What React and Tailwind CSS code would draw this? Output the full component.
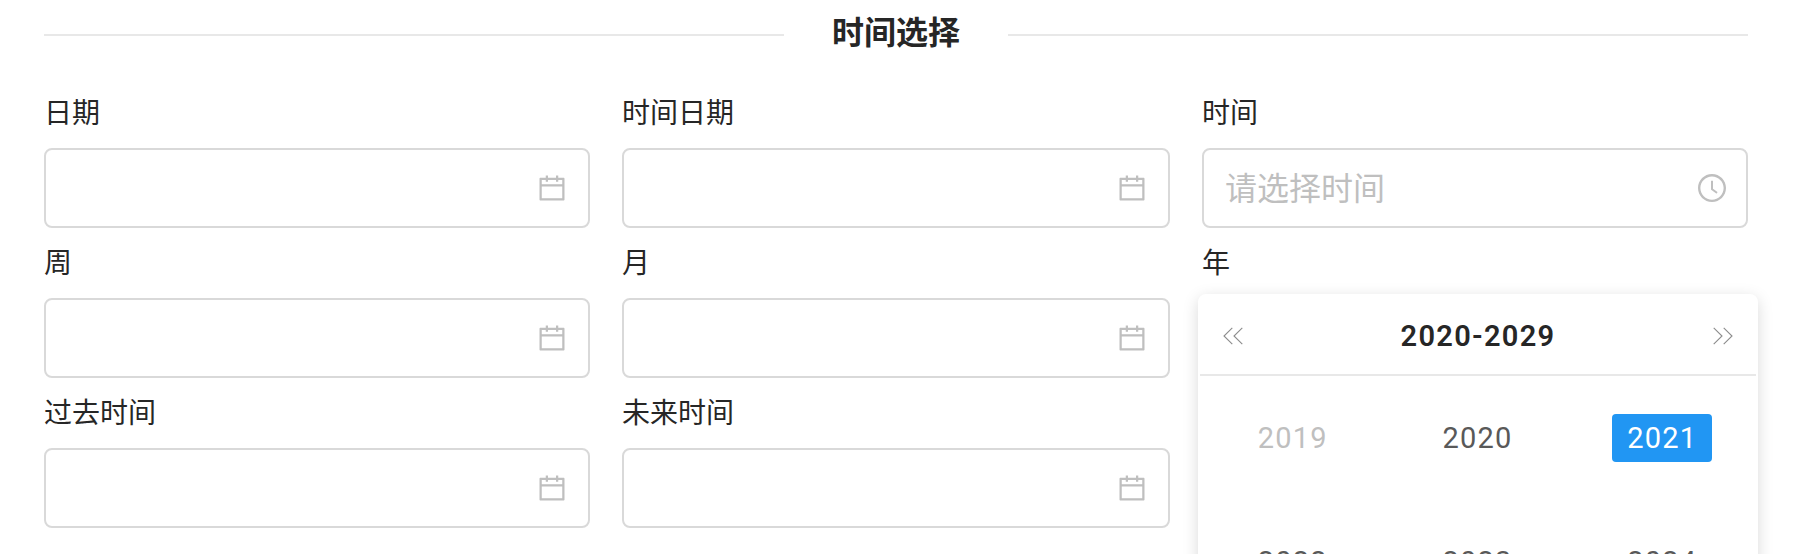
const CalendarIcon = () => (
  <svg viewBox="64 64 896 896" className="size-7 shrink-0 fill-[#bfbfbf]">
    <path d="M880 184H712v-64c0-4.4-3.6-8-8-8h-56c-4.4 0-8 3.6-8 8v64H384v-64c0-4.4-3.6-8-8-8h-56c-4.4 0-8 3.6-8 8v64H144c-17.7 0-32 14.3-32 32v664c0 17.7 14.3 32 32 32h736c17.7 0 32-14.3 32-32V216c0-17.7-14.3-32-32-32zm-40 656H184V460h656v380zM184 392V256h128v48c0 4.4 3.6 8 8 8h56c4.4 0 8-3.6 8-8v-48h256v48c0 4.4 3.6 8 8 8h56c4.4 0 8-3.6 8-8v-48h128v136H184z" />
  </svg>
);

const ClockIcon = () => (
  <svg viewBox="64 64 896 896" className="-mr-0.5 size-7 shrink-0 fill-[#bfbfbf]">
    <path d="M512 64C264.6 64 64 264.6 64 512s200.6 448 448 448 448-200.6 448-448S759.4 64 512 64zm0 820c-205.4 0-372-166.6-372-372s166.6-372 372-372 372 166.6 372 372-166.6 372-372 372z" />
    <path d="M686.7 638.6L544.1 535.5V288c0-4.4-3.6-8-8-8H488c-4.4 0-8 3.6-8 8v275.4c0 2.6 1.2 5 3.3 6.5l165.4 120.6c3.6 2.6 8.6 1.8 11.2-1.7l28.6-39c2.6-3.7 1.8-8.7-1.8-11.2z" />
  </svg>
);

const DoubleChevron = ({ flipped }) => (
  <svg
    viewBox="0 0 20 18"
    className={flipped ? "h-[18px] w-5 -scale-x-100" : "h-[18px] w-5"}
    fill="none"
    stroke="#8c8c8c"
    strokeWidth="1.1"
  >
    <path d="M9.3 .8L1 9l8.3 8.2M19.3 .8L11 9l8.3 8.2" />
  </svg>
);

function Field({ label, placeholder, icon, children }) {
  return (
    <div className="relative flex h-[150px] flex-col">
      <label className="flex h-[70px] items-center pb-1 text-[28px] leading-none">{label}</label>
      <div className="flex h-20 items-center justify-between rounded-lg border-2 border-[#d9d9d9] bg-white px-[22px]">
        <span className="-ml-px pb-1 text-[32px] leading-none text-[#bfbfbf]">{placeholder}</span>
        {icon}
      </div>
      {children}
    </div>
  );
}

const years = [2019, 2020, 2021, 2022, 2023, 2024];

function yearStyle(year) {
  if (year === 2021) return "bg-[#2196f3] text-white";
  if (year < 2020 || year > 2029) return "text-[#bfbfbf]";
  return "text-[#595959]";
}

function YearPanel() {
  return (
    <div className="absolute top-[66px] -left-1 z-10 w-[560px] rounded-lg border-2 border-white bg-white font-['Roboto','Noto_Sans_CJK_SC',sans-serif] shadow-[0_4px_16px_rgba(0,0,0,0.15)]">
      <div className="flex h-20 items-center justify-between border-b-2 border-[#e8e8e8] px-[23px] pt-0.5">
        <DoubleChevron />
        <span className="text-[29px] leading-none font-semibold tracking-[1.3px]">2020-2029</span>
        <DoubleChevron flipped />
      </div>
      <div className="grid grid-cols-3 pr-0.5 tabular-nums">
        {years.map((year) => (
          <div key={year} className="flex h-[124px] items-center justify-center">
            <span
              className={`flex h-12 w-[100px] items-center justify-center rounded pt-px pl-px text-[29px] leading-none tracking-[1.2px] ${yearStyle(year)}`}
            >
              {year}
            </span>
          </div>
        ))}
      </div>
    </div>
  );
}

export default function App() {
  return (
    <div className="h-[554px] overflow-hidden bg-white pr-12 pl-11 font-['Noto_Sans_CJK_SC',sans-serif] text-[#262626]">
      <div className="flex h-[70px] items-center gap-12">
        <div className="h-0.5 flex-1 bg-[#e8e8e8]" />
        <h2 className="-mt-2.5 text-[32px] leading-none font-semibold">时间选择</h2>
        <div className="h-0.5 flex-1 bg-[#e8e8e8]" />
      </div>
      <div className="mt-2 grid grid-cols-[546px_548px_546px] gap-x-8">
        <Field label="日期" icon={<CalendarIcon />} />
        <Field label="时间日期" icon={<CalendarIcon />} />
        <Field label="时间" placeholder="请选择时间" icon={<ClockIcon />} />
        <Field label="周" icon={<CalendarIcon />} />
        <Field label="月" icon={<CalendarIcon />} />
        <Field label="年" icon={<CalendarIcon />}>
          <YearPanel />
        </Field>
        <Field label="过去时间" icon={<CalendarIcon />} />
        <Field label="未来时间" icon={<CalendarIcon />} />
      </div>
    </div>
  );
}
